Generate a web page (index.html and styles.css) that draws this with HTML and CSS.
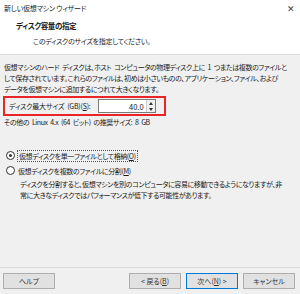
FILE: index.html
```html
<!DOCTYPE html>
<html lang="ja">
<head>
  <meta charset="UTF-8" />
  <title>新しい仮想マシン ウィザード</title>
  <link rel="stylesheet" href="styles.css">
</head>
<body>
  <div class="wizard">
    <!-- Title + header -->
    <div class="header">
      <div class="title-bar">
        <span>新しい仮想マシン ウィザード</span>
        <span class="close">✕</span>
      </div>
      <div class="heading">ディスク容量の指定</div>
      <div class="subheading">このディスクのサイズを指定してください。</div>
    </div>

    <div class="content">
      <p class="intro">仮想マシンのハード ディスクは、ホスト コンピュータの物理ディスク上に 1 つまたは複数のファイルと<br>して保存されています。これらのファイルは、初めは小さいものの、アプリケーション、ファイル、および<br>データを仮想マシンに追加するにつれて大きくなります。</p>

      <div class="size-row">
        <label>ディスク最大サイズ (GB)(<u>S</u>):</label>
        <div class="spin">
          <span class="spin-value">40.0</span>
          <div class="spin-btns">
            <span class="up"></span>
            <span class="down"></span>
          </div>
        </div>
      </div>
      <div class="recommend">その他の Linux 4.x (64 ビット) の推奨サイズ: 8 GB</div>

      <div class="options">
        <div class="radio-row">
          <span class="radio checked"></span>
          <span class="focus">仮想ディスクを単一ファイルとして格納(<u>O</u>)</span>
        </div>
        <div class="radio-row">
          <span class="radio"></span>
          <span>仮想ディスクを複数のファイルに分割(<u>M</u>)</span>
        </div>
        <p class="note">ディスクを分割すると、仮想マシンを別のコンピュータに容易に移動できるようになりますが、非<br>常に大きなディスクではパフォーマンスが低下する可能性があります。</p>
      </div>
    </div>

    <div class="footer">
      <button class="btn">ヘルプ</button>
      <div class="nav">
        <button class="btn">&lt; 戻る(<u>B</u>)</button>
        <button class="btn primary">次へ(<u>N</u>) &gt;</button>
        <button class="btn">キャンセル</button>
      </div>
    </div>
  </div>
</body>
</html>
```

FILE: styles.css
```css
* {
  margin: 0;
  padding: 0;
  box-sizing: border-box;
}

body {
  width: 300px;
  height: 294px;
  overflow: hidden;
  background: #f0f0f0;
  font-family: "Noto Sans CJK JP", "Noto Sans", sans-serif;
  font-size: 7px;
  letter-spacing: -0.4px;
  word-spacing: 1.5px;
  font-feature-settings: "palt";
  color: #1a1a1a;
  white-space: nowrap;
}

u {
  text-decoration: underline;
}

.wizard {
  display: flex;
  flex-direction: column;
  height: 100%;
}

.header {
  background: #fff;
  height: 55px;
  border-bottom: 1px solid #dcdcdc;
}

.title-bar {
  display: flex;
  justify-content: space-between;
  align-items: center;
  height: 15px;
  padding: 1px 5px 0 4px;
  letter-spacing: -0.2px;
  word-spacing: 0;
}

.close {
  font-size: 9px;
  color: #444;
}

.heading {
  font-weight: bold;
  font-size: 7.5px;
  margin: 5px 0 0 16px;
  line-height: 12px;
}

.subheading {
  margin: 3px 0 0 33px;
  line-height: 12px;
  letter-spacing: -0.3px;
}

.content {
  flex: 1;
  padding: 7px 4px 0 4px;
}

.intro {
  line-height: 11px;
}

.size-row {
  display: flex;
  align-items: center;
  gap: 7px;
  width: 163px;
  height: 20px;
  margin: 1px 0 0 -1px;
  padding: 0 0 0 4px;
  border: 2px solid #e8262a;
  letter-spacing: -0.2px;
}

.spin {
  display: flex;
  align-items: center;
  width: 58px;
  height: 14px;
  background: #fff;
  border: 1px solid #7a7a7a;
}

.spin-value {
  flex: 1;
  text-align: right;
  padding-right: 2px;
  font-size: 7.5px;
  letter-spacing: 0;
}

.spin-btns {
  display: flex;
  flex-direction: column;
  justify-content: space-around;
  align-items: center;
  width: 9px;
  height: 100%;
  background: #f0f0f0;
  border-left: 1px solid #cfcfcf;
}

.spin-btns span {
  width: 0;
  height: 0;
  border-left: 2px solid transparent;
  border-right: 2px solid transparent;
}

.spin-btns .up {
  border-bottom: 3px solid #333;
}

.spin-btns .down {
  border-top: 3px solid #333;
}

.recommend {
  margin-top: 0;
  line-height: 12px;
}

.options {
  margin-top: 20px;
  padding-left: 2px;
}

.radio-row {
  display: flex;
  align-items: center;
  gap: 3px;
  height: 15px;
}

.radio {
  position: relative;
  width: 9px;
  height: 9px;
  border: 1px solid #333;
  border-radius: 50%;
  background: #fff;
}

.radio.checked::after {
  content: "";
  position: absolute;
  top: 2px;
  left: 2px;
  width: 3px;
  height: 3px;
  border-radius: 50%;
  background: #333;
}

.focus {
  outline: 1px dotted #555;
  padding: 0 1px;
}

.note {
  margin: 1px 0 0 14px;
  line-height: 11px;
}

.footer {
  display: flex;
  justify-content: space-between;
  align-items: center;
  height: 27px;
  padding: 0 5px 0 3px;
  border-top: 1px solid #d8d8d8;
}

.nav {
  display: flex;
  gap: 5px;
}

.btn {
  width: 52px;
  height: 16px;
  font: inherit;
  color: #333;
  background: #e1e1e1;
  border: 1px solid #adadad;
}

.btn.primary {
  border-color: #0078d7;
}
```
